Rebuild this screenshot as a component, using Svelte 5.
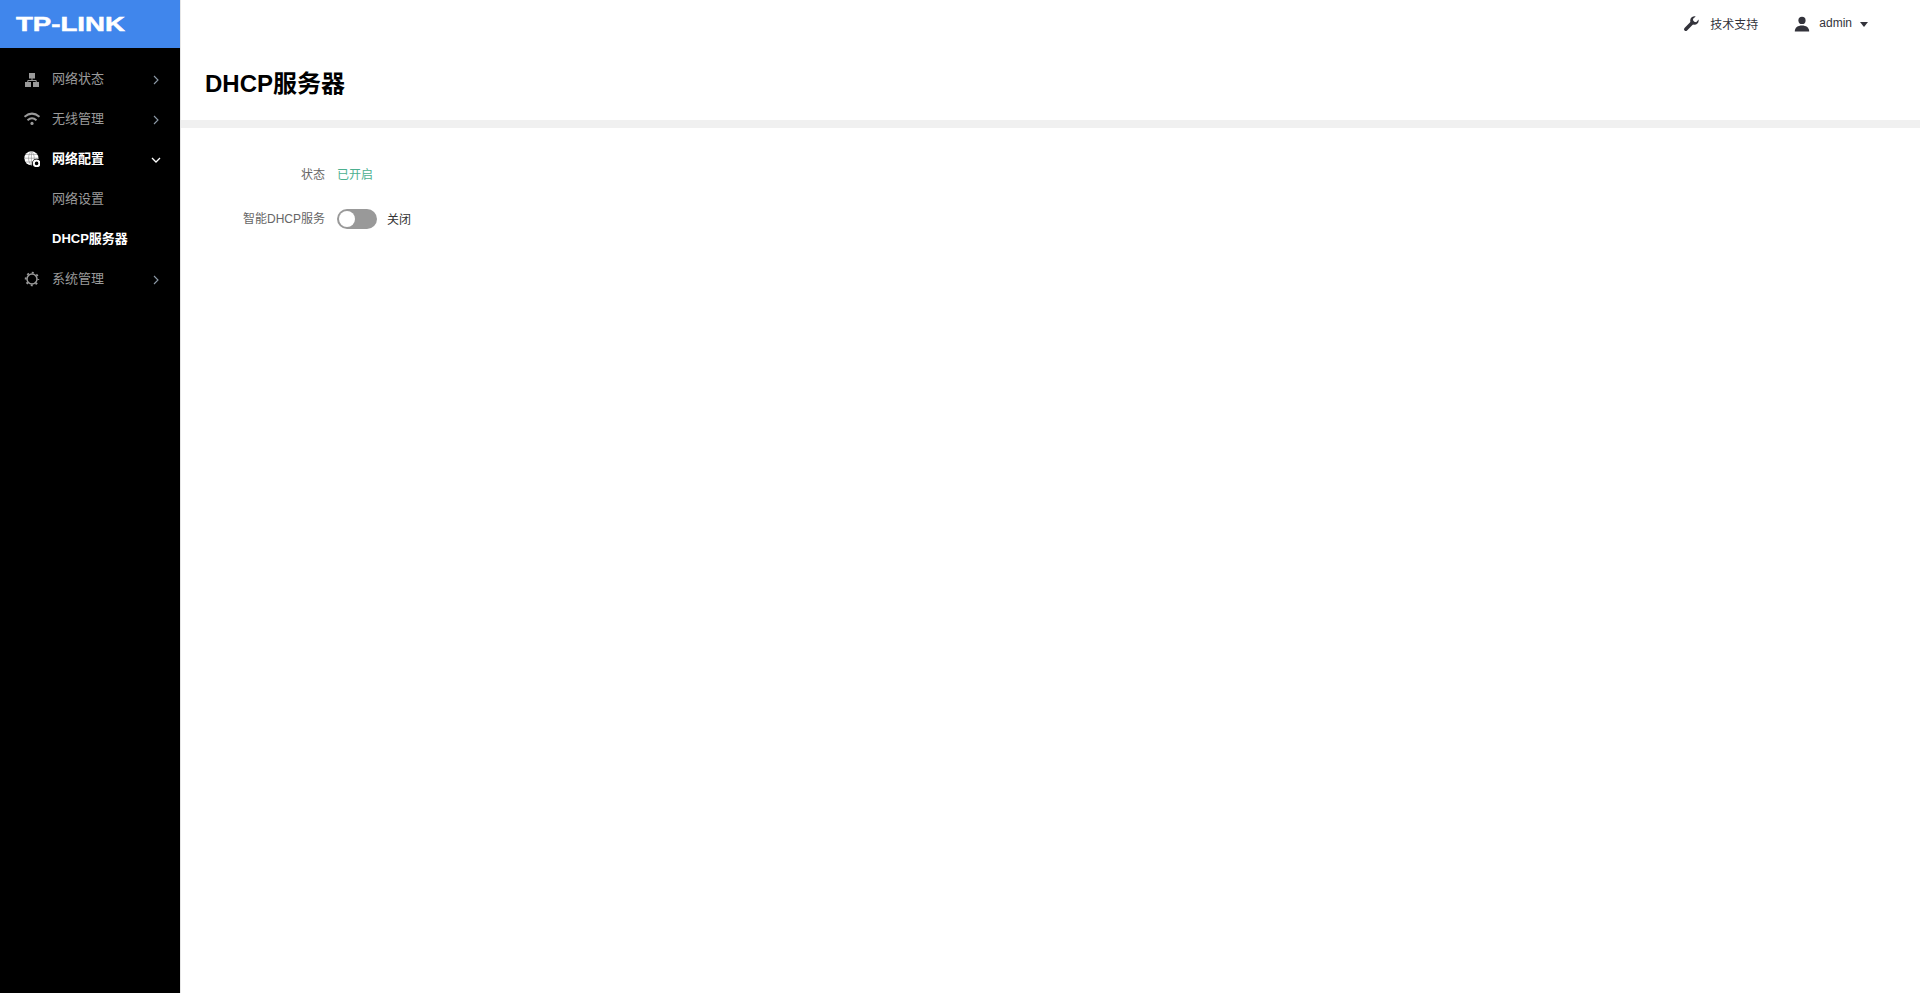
<script>
  const menu = [
    { label: '网络状态', icon: 'net' },
    { label: '无线管理', icon: 'wifi' },
    { label: '网络配置', icon: 'globe', open: true, children: [
      { label: '网络设置' },
      { label: 'DHCP服务器', active: true }
    ] },
    { label: '系统管理', icon: 'gear' }
  ]
</script>

{#snippet icon(name)}
  <svg class="ico" viewBox="0 0 16 16" width="16" height="16">
    {#if name === 'net'}
      <rect x="5" y="2" width="6" height="5.5" fill="currentColor"/>
      <rect x="1" y="11" width="6" height="5" fill="currentColor"/>
      <rect x="9" y="11" width="6" height="5" fill="currentColor"/>
      <path d="M8 7v2.5M3.8 11V9.5h8.4V11" fill="none" stroke="currentColor" stroke-width="1"/>
    {:else if name === 'wifi'}
      <path d="M.5 5.8Q8-.6 15.5 5.8" fill="none" stroke="currentColor" stroke-width="2"/>
      <path d="M3.5 9.2Q8 5.4 12.5 9.2" fill="none" stroke="currentColor" stroke-width="2"/>
      <circle cx="8" cy="12.4" r="1.6" fill="currentColor"/>
    {:else if name === 'globe'}
      <circle cx="7.4" cy="7.2" r="7" fill="currentColor"/>
      <path d="M7.4 .2v14M.4 7.2h14M2 3.4h11M2 11h11M7.4 .2C3.6 3.6 3.6 10.8 7.4 14.2M7.4 .2c3.8 3.4 3.8 10.6 0 14" fill="none" stroke="#8a8a8a" stroke-width=".6"/>
      <circle cx="12.6" cy="12.4" r="4.6" fill="#000"/>
      <circle cx="12.6" cy="12.4" r="2.8" fill="none" stroke="currentColor" stroke-width="2"/>
    {:else}
      <circle cx="8" cy="8" r="5" fill="none" stroke="currentColor" stroke-width="1.5"/>
      <circle cx="8" cy="8" r="6.3" fill="none" stroke="currentColor" stroke-width="1.8" stroke-dasharray="2 2.95" stroke-dashoffset="1"/>
    {/if}
  </svg>
{/snippet}

<div class="layout">
  <aside class="side">
    <div class="logo"><span>TP-LINK</span></div>
    <nav class="nav">
      {#each menu as item}
        <div class="row" class:open={item.open}>
          {@render icon(item.icon)}
          <span class="label">{item.label}</span>
          <svg class="arrow" viewBox="0 0 10 10" width="10" height="10">
            {#if item.open}
              <path d="M1 3l4 4 4-4" fill="none" stroke="currentColor" stroke-width="1.3"/>
            {:else}
              <path d="M3 1l4 4-4 4" fill="none" stroke="currentColor" stroke-width="1.1"/>
            {/if}
          </svg>
        </div>
        {#if item.children}
          {#each item.children as sub}
            <div class="row sub" class:active={sub.active}>
              <span class="label">{sub.label}</span>
            </div>
          {/each}
        {/if}
      {/each}
    </nav>
  </aside>

  <main class="main">
    <header class="top">
      <div class="top-item support">
        <svg viewBox="0 0 16 16" width="16" height="16">
          <path d="M2.8 13.2L9.4 6.6" stroke="#33333b" stroke-width="3.6" stroke-linecap="round"/>
          <path d="M15.6 3.6c.6 2.8-1.6 5.4-4.6 5.2-2.4-.2-4-2.2-3.8-4.6C7.4 1.6 10 0 12.6.4L9.9 3l.6 2.6 2.6.6z" fill="#33333b"/>
        </svg>
        <span>技术支持</span>
      </div>
      <div class="top-item user">
        <svg viewBox="0 0 16 16" width="16" height="16">
          <circle cx="8" cy="4.4" r="3.6" fill="#33333b"/>
          <path d="M.8 15.5c0-4 3-6 7.2-6s7.2 2 7.2 6z" fill="#33333b"/>
        </svg>
        <span>admin</span>
        <i class="caret"></i>
      </div>
    </header>
    <h1 class="title">DHCP服务器</h1>
    <div class="band"></div>
    <section class="form">
      <div class="field">
        <span class="name">状态</span>
        <span class="on">已开启</span>
      </div>
      <div class="field">
        <span class="name">智能DHCP服务</span>
        <span class="switch"><i></i></span>
        <span class="off">关闭</span>
      </div>
    </section>
  </main>
</div>

<style>
  :global(body) {
    background: #fff;
  }
  .layout {
    display: flex;
    height: 993px;
    overflow: hidden;
    font-family: "Liberation Sans", "Noto Sans CJK SC", sans-serif;
  }
  .side {
    width: 180px;
    flex: none;
    background: #000;
  }
  .logo {
    height: 48px;
    background: #4086ec;
    display: flex;
    align-items: center;
    padding-left: 16px;
    overflow: hidden;
  }
  .logo span {
    font-size: 20px;
    font-weight: 700;
    color: #fff;
    display: block;
    transform: scaleX(1.38);
    transform-origin: left center;
    -webkit-text-stroke: 0.5px #fff;
  }
  .nav {
    padding-top: 11px;
  }
  .row {
    height: 40px;
    display: flex;
    align-items: center;
    padding: 0 19px 0 24px;
    color: #9a9a9a;
    font-size: 13px;
  }
  .row.open,
  .row.active {
    color: #fff;
    font-weight: 700;
  }
  .ico {
    flex: none;
    margin-right: 12px;
  }
  .label {
    flex: 1;
    margin-bottom: 4px;
  }
  .arrow {
    flex: none;
    margin-top: 1px;
    color: #8d9aa8;
  }
  .open .arrow {
    color: #fff;
  }
  .sub {
    padding-left: 52px;
  }
  .main {
    flex: 1;
    border-left: 1px solid #e6e6e6;
    min-width: 0;
  }
  .top {
    height: 48px;
    display: flex;
    align-items: center;
    justify-content: flex-end;
    padding-right: 52px;
    font-size: 12px;
    color: #33333b;
  }
  .top-item {
    display: flex;
    align-items: center;
  }
  .top-item span {
    margin-bottom: 2px;
  }
  .support {
    margin-right: 36px;
  }
  .support span {
    margin-left: 11px;
  }
  .user span {
    margin-left: 9px;
  }
  .caret {
    width: 0;
    height: 0;
    margin-left: 8px;
    border: 4px solid transparent;
    border-top: 5px solid #33333b;
    border-bottom: 0;
  }
  .title {
    margin: 0;
    height: 72px;
    padding-left: 24px;
    font-size: 24px;
    line-height: 72px;
    color: #000;
  }
  .band {
    height: 8px;
    background: #f0f0f0;
  }
  .form {
    padding-top: 34px;
    font-size: 12px;
  }
  .field {
    display: flex;
    align-items: center;
    height: 24px;
    margin-bottom: 20px;
  }
  .name {
    width: 144px;
    text-align: right;
    color: #666;
    margin-right: 12px;
    margin-bottom: 2px;
  }
  .on {
    color: #4cb08f;
    margin-bottom: 2px;
  }
  .switch {
    width: 40px;
    height: 20px;
    border-radius: 10px;
    background: #999;
    position: relative;
    margin-top: 2px;
    margin-right: 10px;
  }
  .switch i {
    position: absolute;
    left: 2px;
    top: 2px;
    width: 16px;
    height: 16px;
    border-radius: 50%;
    background: #fff;
  }
  .off {
    color: #333;
  }
</style>
